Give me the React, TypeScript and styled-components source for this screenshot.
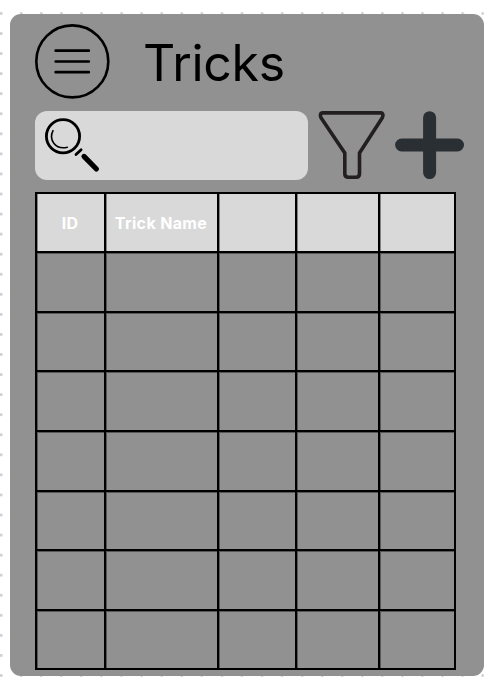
import React from "react";
import styled, { createGlobalStyle } from "styled-components";

const GlobalStyle = createGlobalStyle`
  * { box-sizing: border-box; }
  body {
    margin: 0;
    background: #fff;
    font-family: Inter, "Liberation Sans", sans-serif;
  }
`;

const Canvas = styled.main`
  width: 484px;
  height: 683px;
  padding: 14px 0 0 10px;
  overflow: hidden;
  background-color: #fff;
  background-image: radial-gradient(circle at 1px 1.5px, #cdd2da 1.3px, transparent 1.9px);
  background-size: 20.07px 20.07px;
  background-position: 0 12px;
`;

const Panel = styled.section`
  width: 474px;
  height: 662px;
  padding: 10px 0 0 25px;
  border-radius: 11px;
  background: #919191;
`;

const Header = styled.header`
  display: flex;
  align-items: center;
  height: 75px;
`;

const MenuButton = styled.button`
  display: block;
  width: 75px;
  height: 75px;
  padding: 0;
  border: 0;
  background: none;
`;

const Title = styled.h1`
  margin: 3px 0 0 33px;
  font-size: 50px;
  line-height: 60px;
  font-weight: 400;
  letter-spacing: -0.3px;
  color: #000;
`;

const Toolbar = styled.div`
  display: flex;
  height: 69px;
  margin-top: 12px;
`;

const SearchBox = styled.div`
  width: 273px;
  height: 69px;
  border-radius: 12px;
  background: #d9d9d9;
`;

const IconButton = styled.button<{ $width: number; $gap: number }>`
  width: ${(p) => p.$width}px;
  height: 69px;
  margin-left: ${(p) => p.$gap}px;
  padding: 0;
  border: 0;
  background: none;
`;

const Icon = styled.svg`
  display: block;
  overflow: visible;
`;

const Table = styled.div`
  display: grid;
  width: 421px;
  margin-top: 12px;
  padding: 2px;
  gap: 2px;
  grid-template-columns: 67px 111px 76px 81px 74px;
  grid-template-rows: 57px 58px 57px 58px 58px 57px 58px 57px;
  background: #000;
`;

const Cell = styled.div<{ $header?: boolean }>`
  display: flex;
  align-items: center;
  justify-content: center;
  padding: 1px 1px 0 0;
  background: ${(p) => (p.$header ? "#d9d9d9" : "#919191")};
  box-shadow: inset 1px ${(p) => (p.$header ? "0" : "1px")} 0 rgba(0, 0, 0, 0.4);
  color: #fff;
  font-size: 16px;
  line-height: 20px;
  font-weight: 700;
  letter-spacing: 0.35px;
  white-space: nowrap;
`;

const headings = ["ID", "Trick Name", "", "", ""];
const emptyCells = Array.from({ length: 7 * headings.length }, (_, i) => i);

export default function App() {
  return (
    <Canvas>
      <GlobalStyle />
      <Panel>
        <Header>
          <MenuButton aria-label="Menu">
            <Icon width="75" height="75" viewBox="0 0 75 75" fill="none" stroke="#000">
              <circle cx="37.3" cy="37.4" r="36" strokeWidth="2.6" />
              <path d="M20.7 26.7H53.8M20.7 37.5H53.8M20.7 48.2H53.8" strokeWidth="2.7" strokeLinecap="round" />
            </Icon>
          </MenuButton>
          <Title>Tricks</Title>
        </Header>
        <Toolbar>
          <SearchBox role="search">
            <Icon width="69" height="69" viewBox="0 0 69 69" fill="none" stroke="#000" strokeLinecap="round">
              <circle cx="28" cy="25.3" r="16.6" strokeWidth="2.8" />
              <path d="M18 19.7C13.4 29 20.5 39 32.3 36.2" strokeWidth="1.6" />
              <path d="M41 43.6L46.1 38.7" strokeWidth="2.8" />
              <path d="M49 45.4L61.4 58" strokeWidth="5.2" />
            </Icon>
          </SearchBox>
          <IconButton $width={67} $gap={10} aria-label="Filter">
            <Icon width="67" height="69" viewBox="0 0 67 69" fill="none" stroke="#231f20" strokeWidth="3.6" strokeLinejoin="round">
              <path d="M4.7 1.9H62.8C65 1.9 65.6 4.5 64.3 6.8L41.5 42V62.8C41.5 65.1 40.2 66.2 38 66.2H30.4C28.2 66.2 26.8 65.1 26.8 62.8V42L3 6.8C1.7 4.5 2.4 1.9 4.7 1.9Z" />
            </Icon>
          </IconButton>
          <IconButton $width={69} $gap={10} aria-label="Add trick">
            <Icon width="69" height="69" viewBox="0 0 69 69" fill="none" stroke="#2a2f33" strokeWidth="13" strokeLinecap="round">
              <path d="M34.6 6.7V61.6M6.6 34H62.5" />
            </Icon>
          </IconButton>
        </Toolbar>
        <Table>
          {headings.map((label, i) => (
            <Cell key={`h${i}`} $header>
              {label}
            </Cell>
          ))}
          {emptyCells.map((i) => (
            <Cell key={i} />
          ))}
        </Table>
      </Panel>
    </Canvas>
  );
}
